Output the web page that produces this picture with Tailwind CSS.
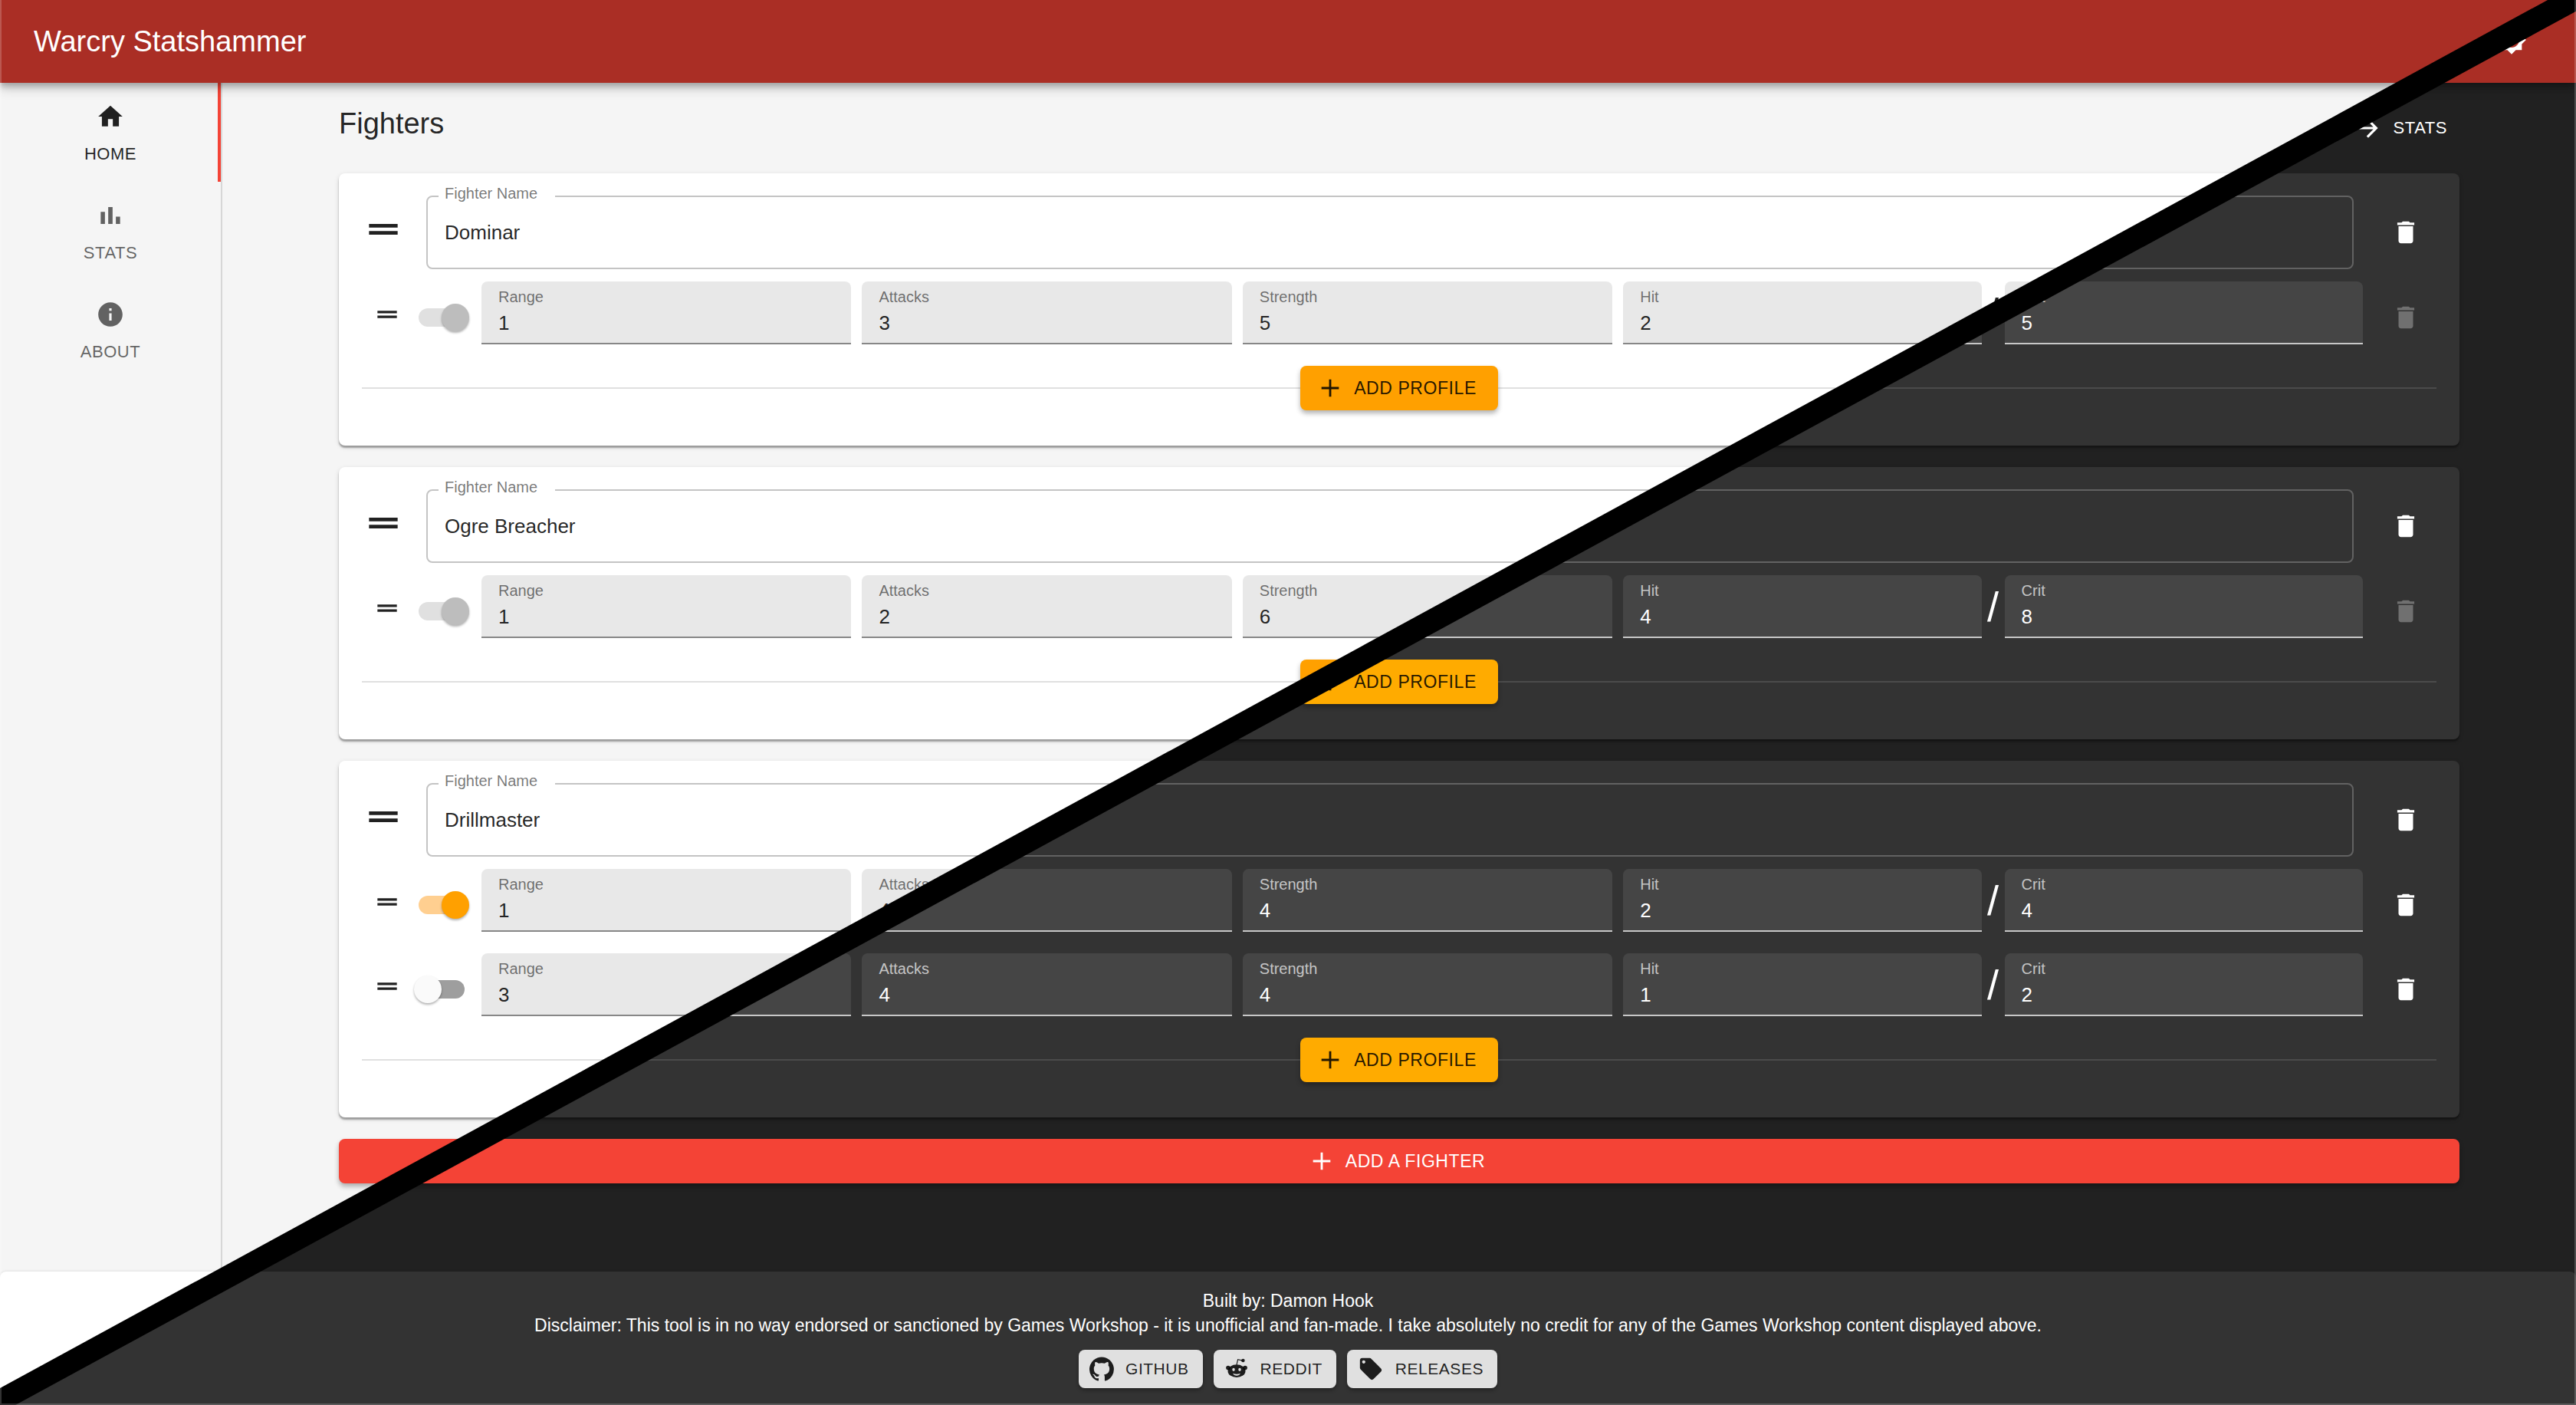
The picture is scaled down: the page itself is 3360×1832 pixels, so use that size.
<!DOCTYPE html>
<html lang="en">
<head>
<meta charset="utf-8">
<meta name="viewport" content="width=device-width, initial-scale=1">
<title>Warcry Statshammer</title>
<script src="https://cdn.jsdelivr.net/npm/@tailwindcss/browser@4"></script>
</head>
<body class="font-['Liberation_Sans',Arial,sans-serif]">
<div class="relative overflow-hidden">
  <div id="light" class="isolate [--bg:#f5f5f5] [--paper:#ffffff] [--text:rgba(0,0,0,.87)] [--muted:rgba(0,0,0,.54)] [--nav:rgba(0,0,0,.6)] [--outline:rgba(0,0,0,.23)] [--line:rgba(0,0,0,.12)] [--field:rgba(0,0,0,.09)] [--under:rgba(0,0,0,.42)] [--off:rgba(0,0,0,.26)] [--accent:#ffa000]"></div>
  <!-- dark theme, revealed below the diagonal -->
  <div id="dark" class="absolute inset-0 isolate [clip-path:polygon(100%_0,100%_100%,0_100%,0_99.5%)] [--bg:#212121] [--paper:#333333] [--text:#ffffff] [--muted:rgba(255,255,255,.7)] [--nav:rgba(255,255,255,.7)] [--outline:rgba(255,255,255,.23)] [--line:rgba(255,255,255,.12)] [--field:rgba(255,255,255,.09)] [--under:rgba(255,255,255,.7)] [--off:rgba(255,255,255,.3)] [--accent:#ffab00]"></div>
  <!-- divider band between the two themes -->
  <div class="pointer-events-none absolute inset-0 bg-black [clip-path:polygon(98.9%_0,100%_0,100%_0.8%,0.6%_100%,0_100%,0_98.8%)]"></div>
  <div class="pointer-events-none absolute inset-0 border-x-2 border-b-2 border-white/20"></div>
</div>

<template id="page">
  <div class="flex min-h-screen flex-col bg-[var(--bg)] text-[var(--text)]">
    <header class="relative z-10 flex h-[108px] items-center justify-between bg-[#aa2e25] px-11 text-white shadow-[0_4px_8px_rgba(0,0,0,.25),0_8px_14px_rgba(0,0,0,.16)]">
      <h1 class="text-[38px] leading-12">Warcry Statshammer</h1>
      <button type="button" aria-label="Toggle theme" class="mr-5 mb-1"><svg class="size-10" viewBox="0 0 24 24" fill="currentColor"><path d="M20 8.69V4h-4.69L12 .69 8.69 4H4v4.69L.69 12 4 15.31V20h4.69L12 23.31 15.31 20H20v-4.69L23.31 12 20 8.69zM12 18c-3.31 0-6-2.69-6-6s2.69-6 6-6 6 2.69 6 6-2.69 6-6 6z"/></svg></button>
    </header>
    <div class="flex flex-1">
      <nav class="flex w-[290px] flex-col border-r-2 border-[var(--line)] text-[22px] leading-6 tracking-wide text-[var(--nav)]">
        <a href="#home" class="flex h-[129px] flex-col items-center justify-center gap-[18px] border-r-4 border-[#f44336] pl-1 text-[var(--text)]"><svg class="size-[38px]" viewBox="0 0 24 24" fill="currentColor"><path d="M10 20v-6h4v6h5v-8h3L12 3 2 12h3v8z"/></svg>HOME</a>
        <a href="#stats" class="flex h-[129px] flex-col items-center justify-center gap-[18px]"><svg class="size-[38px]" viewBox="0 0 24 24" fill="currentColor"><path d="M4 9h3.5v10H4zM10.2 5h3.6v14h-3.6zM16.5 13H20v6h-3.500z"/></svg>STATS</a>
        <a href="#about" class="flex h-[129px] flex-col items-center justify-center gap-[18px]"><svg class="size-[38px]" viewBox="0 0 24 24" fill="currentColor"><path d="M12 2C6.480 2 2 6.480 2 12s4.480 10 10 10 10-4.480 10-10S17.520 2 12 2zm1 15h-2v-6h2v6zm0-8h-2V7h2v2z"/></svg>ABOUT</a>
      </nav>
      <main class="flex min-w-0 flex-1 flex-col px-[152px] pb-28">
        <div class="flex h-[118px] items-center justify-between">
          <h2 class="pb-3 text-[38px] leading-12">Fighters</h2>
          <button type="button" class="flex items-center gap-[14px] px-4 text-[22px] leading-6 tracking-wide"><svg class="size-[38px]" viewBox="0 0 24 24" fill="currentColor"><path d="M12 4l-1.410 1.410L16.170 11H4v2h12.170l-5.580 5.590L12 20l8-8z"/></svg>STATS</button>
        </div>
        <div data-fighters class="flex flex-col gap-7"></div>
        <button type="button" class="mt-7 flex h-[58px] items-center justify-center gap-[14px] rounded-lg bg-[#f44336] pr-[6px] text-[23px] leading-6 tracking-wide text-white shadow-[0_4px_6px_rgba(0,0,0,.3)]"><svg class="size-[34px]" viewBox="0 0 24 24" fill="currentColor"><path d="M20 13h-7v7h-2v-7H4v-2h7V4h2v7h7v2z"/></svg>ADD A FIGHTER</button>
      </main>
    </div>
    <footer class="flex flex-col items-center rounded-t-lg bg-[var(--paper)] pt-[22px] pb-[22px] text-[23px] leading-8 shadow-[0_-1px_3px_rgba(0,0,0,.08)]">
      <p>Built by: Damon Hook</p>
      <p>Disclaimer: This tool is in no way endorsed or sanctioned by Games Workshop - it is unofficial and fan-made. I take absolutely no credit for any of the Games Workshop content displayed above.</p>
      <div class="mt-4 flex gap-[14px] text-[21px] leading-6 tracking-wide text-black/87">
        <a href="#github" class="flex h-[50px] items-center gap-[15px] rounded-lg bg-[#e0e0e0] pr-[18px] pl-[14px] shadow-[0_3px_5px_rgba(0,0,0,.3)]"><svg class="size-8" viewBox="0 0 24 24" fill="currentColor"><path d="M12 .3a12 12 0 0 0-3.800 23.380c.6.120.83-.26.83-.57L9 21.070c-3.340.72-4.040-1.610-4.040-1.610-.55-1.390-1.340-1.760-1.340-1.760-1.080-.74.09-.73.09-.73 1.200.09 1.830 1.240 1.830 1.240 1.080 1.830 2.810 1.300 3.500 1 .1-.78.420-1.310.76-1.610-2.670-.3-5.470-1.330-5.470-5.930 0-1.310.470-2.380 1.240-3.220-.140-.3-.54-1.520.1-3.180 0 0 1-.320 3.300 1.230a11.500 11.500 0 0 1 6 0c2.280-1.550 3.290-1.230 3.290-1.230.640 1.660.240 2.880.120 3.180a4.650 4.650 0 0 1 1.230 3.220c0 4.610-2.800 5.630-5.480 5.920.420.360.810 1.100.810 2.220l-.010 3.290c0 .310.200.69.820.57A12 12 0 0 0 12 .3"/></svg>GITHUB</a>
        <a href="#reddit" class="flex h-[50px] items-center gap-[15px] rounded-lg bg-[#e0e0e0] pr-[18px] pl-[14px] shadow-[0_3px_5px_rgba(0,0,0,.3)]"><svg class="size-8" viewBox="0 0 24 24"><g fill="currentColor"><ellipse cx="12" cy="14" rx="8.600" ry="6.300"/><circle cx="3.700" cy="10.900" r="2.100"/><circle cx="20.300" cy="10.900" r="2.100"/><circle cx="18.300" cy="3.800" r="1.700"/></g><path d="M12 8l1.200-5.200 4.800 1" fill="none" stroke="currentColor" stroke-width=".9"/><g fill="#e0e0e0"><ellipse cx="9" cy="12.600" rx="1.300" ry="1.600"/><ellipse cx="15" cy="12.600" rx="1.300" ry="1.600"/><path d="M8.300 16.400q3.700 1.400 7.400 0-1 2.200-3.700 2.200t-3.700-2.200z"/></g></svg>REDDIT</a>
        <a href="#releases" class="flex h-[50px] items-center gap-[15px] rounded-lg bg-[#e0e0e0] pr-[18px] pl-[14px] shadow-[0_3px_5px_rgba(0,0,0,.3)]"><svg class="size-[34px]" viewBox="0 0 24 24" fill="currentColor"><path d="M21.410 11.580l-9-9C12.050 2.220 11.550 2 11 2H4c-1.100 0-2 .9-2 2v7c0 .55.220 1.050.590 1.420l9 9c.360.360.860.580 1.410.580s1.050-.220 1.410-.590l7-7c.370-.360.590-.860.590-1.410s-.230-1.060-.590-1.420zM5.500 7C4.670 7 4 6.330 4 5.500S4.670 4 5.500 4 7 4.670 7 5.500 6.330 7 5.500 7z"/></svg>RELEASES</a>
      </div>
    </footer>
  </div>
</template>

<script>
const fighters = [
  { name: 'Dominar', profiles: [{ on: true, locked: true, stats: [1, 3, 5, 2, 5] }] },
  { name: 'Ogre Breacher', profiles: [{ on: true, locked: true, stats: [1, 2, 6, 4, 8] }] },
  { name: 'Drillmaster', profiles: [{ on: true, stats: [1, 4, 4, 2, 4] }, { on: false, stats: [3, 4, 4, 1, 2] }] },
];
const handle = size => `<svg class="${size}" viewBox="0 0 24 24" fill="currentColor"><path d="M20 9H4v2h16V9zM4 15h16v-2H4v2z"/></svg>`;
const trash = `<svg class="size-[38px]" viewBox="0 0 24 24" fill="currentColor"><path d="M6 19c0 1.100.9 2 2 2h8c1.100 0 2-.9 2-2V7H6v12zM19 4h-3.500l-1-1h-5l-1 1H5v2h14V4z"/></svg>`;
const field = (id, label, value) => `
  <div class="flex h-[82px] min-w-0 flex-1 flex-col rounded-t-lg border-b-2 border-[var(--under)] bg-[var(--field)] px-[22px] pt-2">
    <label for="${id}" class="text-[20px] leading-6 text-[var(--muted)]">${label}</label>
    <input id="${id}" value="${value}" class="mt-[6px] h-8 w-full bg-transparent text-[26px] leading-8 outline-none">
  </div>`;
const toggle = p => `
  <span class="relative flex h-[94px] w-[72px] shrink-0 items-center">
    <input type="checkbox" role="switch" aria-label="Profile active" ${p.on ? 'checked' : ''} ${p.locked ? 'disabled' : ''} class="peer mx-[6px] h-6 w-[60px] appearance-none rounded-full bg-[#9e9e9e] checked:bg-[#ffcf90] disabled:bg-[#e0e0e0]">
    <span class="pointer-events-none absolute top-[29px] left-0 size-9 rounded-full bg-[#fafafa] shadow-[0_2px_3px_rgba(0,0,0,.3)] peer-checked:left-9 peer-checked:bg-[#ffa000] peer-disabled:bg-[#bdbdbd]"></span>
  </span>`;
const profileRow = (p, id) => `
  <div class="flex h-[94px] items-start gap-4 pl-[14px]">
    <span class="flex h-[86px] items-center">${handle('size-[38px]')}</span>
    ${toggle(p)}
    <div class="grid min-w-0 flex-1 grid-cols-[1fr_1fr_1fr_2fr] gap-[14px]">
      ${field(id + '-range', 'Range', p.stats[0])}
      ${field(id + '-attacks', 'Attacks', p.stats[1])}
      ${field(id + '-strength', 'Strength', p.stats[2])}
      <div class="flex min-w-0">
        ${field(id + '-hit', 'Hit', p.stats[3])}
        <span class="flex h-[82px] w-[30px] items-center justify-center text-[54px] leading-none">/</span>
        ${field(id + '-crit', 'Crit', p.stats[4])}
      </div>
    </div>
    <button type="button" aria-label="Delete profile" ${p.locked ? 'disabled' : ''} class="flex h-[94px] w-20 items-center justify-center disabled:text-[var(--off)]">${trash}</button>
  </div>`;
const card = (f, id) => `
  <section class="flex flex-col gap-4 rounded-lg bg-[var(--paper)] px-[30px] pt-[29px] pb-[46px] shadow-[0_3px_2px_rgba(0,0,0,.3),0_2px_6px_rgba(0,0,0,.14)]">
    <div class="flex h-24 gap-7">
      <span class="flex h-[88px] items-center">${handle('size-14')}</span>
      <fieldset class="-mt-[13px] h-[109px] min-w-0 flex-1 rounded-lg border-2 border-[var(--outline)]">
        <legend class="ml-[14px] h-7 w-[152px] pl-2 text-[20px] leading-5 text-[var(--muted)]"><label for="${id}-name">Fighter Name</label></legend>
        <input id="${id}-name" value="${f.name}" class="h-[66px] w-full bg-transparent px-[22px] text-[26px] outline-none">
      </fieldset>
      <button type="button" aria-label="Delete fighter" class="flex w-20 items-center justify-center">${trash}</button>
    </div>
    ${f.profiles.map((p, i) => profileRow(p, id + '-' + i)).join('')}
    <div class="flex items-center">
      <span class="h-[2px] flex-1 bg-[var(--line)]"></span>
      <button type="button" class="flex h-[58px] w-[258px] items-center justify-center gap-[14px] rounded-lg bg-[var(--accent)] pr-[6px] text-[23px] leading-6 tracking-wide text-black/87 shadow-[0_4px_6px_rgba(0,0,0,.3)]"><svg class="size-[34px]" viewBox="0 0 24 24" fill="currentColor"><path d="M20 13h-7v7h-2v-7H4v-2h7V4h2v7h7v2z"/></svg>ADD PROFILE</button>
      <span class="h-[2px] flex-1 bg-[var(--line)]"></span>
    </div>
  </section>`;
for (const theme of ['light', 'dark']) {
  const page = document.getElementById('page').content.cloneNode(true);
  page.querySelector('[data-fighters]').innerHTML = fighters.map((f, i) => card(f, theme + '-' + i)).join('');
  document.getElementById(theme).append(page);
}
</script>
</body>
</html>
